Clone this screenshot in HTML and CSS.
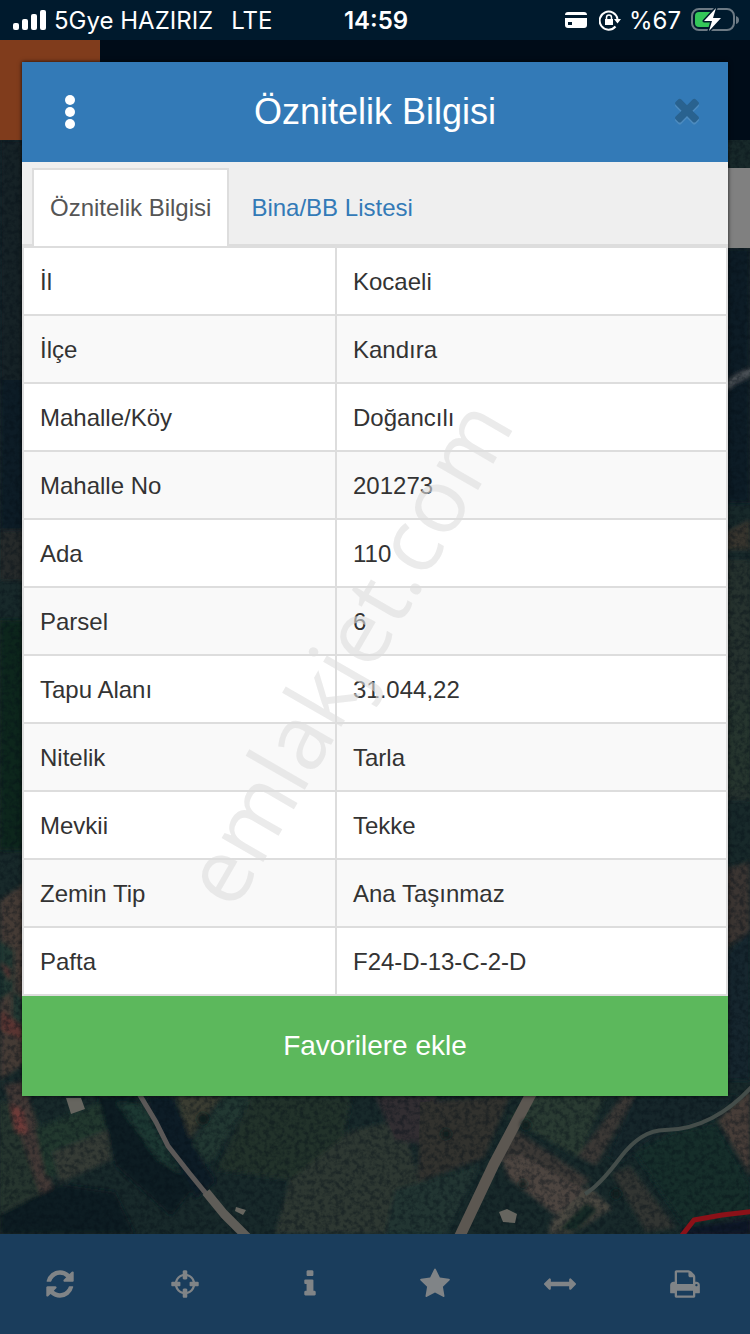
FILE: index.html
```html
<!DOCTYPE html>
<html lang="tr">
<head>
    <meta charset="UTF-8">
    <meta name="viewport" content="width=device-width, initial-scale=1.0">
    <title>Öznitelik Bilgisi</title>
    <link rel="stylesheet" href="styles.css">
</head>
<body>
    <div class="status-bar">
        <div class="status-left">
            <svg class="signal" viewBox="0 0 34 22" width="34" height="22">
                <rect x="1" y="14" width="6" height="7" rx="2"/>
                <rect x="10" y="10" width="6" height="11" rx="2"/>
                <rect x="19" y="5" width="6" height="16" rx="2"/>
                <rect x="28" y="1" width="6" height="20" rx="2"/>
            </svg>
            <span>5Gye HAZIRIZ</span>
            <span class="network">LTE</span>
        </div>
        <div class="clock">14:59</div>
        <div class="status-right">
            <svg viewBox="0 0 22 16" width="22" height="16">
                <path fill="#fff" d="M3 0h16q3 0 3 3H0q0-3 3-3zM0 6h22v7q0 3-3 3H3q-3 0-3-3z"/>
                <rect x="3" y="10" width="4" height="3" fill="#001a2d"/>
            </svg>
            <svg class="lock" viewBox="0 0 22 22" width="22" height="22">
                <path fill="none" stroke="#fff" stroke-width="2" d="M16.500 17.500A9 9 0 1 1 18.500 10"/>
                <path fill="#fff" d="M15 10h7L18.500 14.500zM6 10h8v6H6z"/>
                <path fill="none" stroke="#fff" stroke-width="1.500" d="M7.500 11V8.500a2.500 2.500 0 0 1 5 0V11"/>
            </svg>
            <span class="percent">%67</span>
            <svg class="battery" viewBox="0 0 49 24" width="49" height="24">
                <rect x="1" y="1" width="42" height="21" rx="7" fill="none" stroke="#6d7a84" stroke-width="2"/>
                <path fill="#6d7a84" d="M45 8q3 1 3 4t-3 4z"/>
                <path fill="#34c759" d="M8 4h14v15H8q-4 0-4-4V8q0-4 4-4z"/>
                <path fill="#fff" stroke="#001a2d" stroke-width="3" paint-order="stroke" stroke-linejoin="round" d="M25 0L13 13h8l-3 10L30 10h-8z"/>
            </svg>
        </div>
    </div>

    <div class="top-bar">
        <div class="logo-box"></div>
    </div>

    <div class="map">
        <svg class="satellite" viewBox="0 140 750 1094" preserveAspectRatio="xMidYMax slice">
            <defs>
                <filter id="grain" x="0" y="0" width="100%" height="100%" color-interpolation-filters="sRGB">
                    <feTurbulence type="fractalNoise" baseFrequency="0.2" numOctaves="3" seed="8"/>
                    <feColorMatrix values="0 0 0 0 0.020  0 0 0 0 0.060  0 0 0 0 0.090  3 0 0 0 -1.200"/>
                </filter>
                <filter id="soft"><feGaussianBlur stdDeviation="2"/></filter>
            </defs>
            <rect y="140" width="750" height="1094" fill="#18292a"/>
            <g filter="url(#soft)">
                <!-- left edge -->
                <path fill="#132325" d="M0 140h30v240H0z"/>
                <path fill="#0d1d25" d="M0 380h30v150H0z"/>
                <path fill="#252a2a" d="M0 530h30v50H0z"/>
                <path fill="#11261f" d="M0 620h30v230H0z"/>
                <path fill="#443b36" d="M0 900l30-20v180L0 1080z"/>
                <path fill="#243831" d="M0 940l14 10v40l-14 10zM12 990l14 10v30l-14-10z"/>
                <path fill="#5a3531" d="M0 1010l22 16v14L0 1030zM0 962l10 8v12z"/>
                <!-- right edge -->
                <path fill="#0c1c27" d="M720 248h30v255h-30z"/>
                <path fill="none" stroke="#51575b" stroke-width="6" d="M724 388l10-8 20-10"/>
                <path fill="#39352f" d="M720 535l30-15v30h-30z"/>
                <path fill="#27332f" d="M720 560h30v240h-30z"/>
                <path fill="#26362f" d="M720 700h30v90h-30z"/>
                <path fill="#3b3531" d="M720 870l30-8v70l-30 20z"/>
                <path fill="#14282d" d="M720 960l30-30v150h-30z"/>
                <!-- fields under the dialog -->
                <path fill="#27362f" d="M0 1100l35 10 20 95L0 1218z"/>
                <path fill="#433735" d="M4 1085l20-4 30 110-8 20z"/>
                <path fill="#6e3b38" d="M10 1104l12 6 6 24-12-2z"/>
                <path fill="#20382f" d="M35 1128l65-25 12 55-66 20z"/>
                <path fill="#343a35" d="M52 1152l55-22 4 30-51 23z"/>
                <path fill="#101c23" d="M98 1096h38l55 95-20 25-55-50zM0 1214l60-30 55 8 20 42H0z"/>
                <path fill="#1f3833" d="M116 1102l26 2 46 74-30-18z"/>
                <path fill="#101d25" d="M146 1096h26l30 65 14 20-20 18-40-70z"/>
                <path fill="#3a3c33" d="M176 1096h46l-32 42z"/>
                <path fill="#233831" d="M224 1096h28l-42 68-18-20z"/>
                <path fill="#243029" d="M252 1096h100l-10 50-50 34-75-10z"/>
                <path fill="#2e3733" d="M352 1130l50-10 20 70-20 44H275l15-54z"/>
                <path fill="#302f33" d="M375 1096h62l-4 50-38-6z"/>
                <path fill="#33322f" d="M420 1102l90-6-26 62-66 24z"/>
                <path fill="#223632" d="M395 1190l85-25-35 70h-60z"/>
                <path fill="#293a33" d="M535 1096h70l-26 62-70-40z"/>
                <path fill="#3a3935" d="M516 1130l74 50-20 18-72-40zM622 1096l14-2-40 72-18-10z"/>
                <path fill="#4d453f" d="M502 1158l20-3 67 38-34 22-47-38z"/>
                <path fill="#16252a" d="M634 1096h104l-24 22-54 16-40 28-12-6z"/>
                <path fill="#142e2b" d="M634 1152l40-20 42-8 34 60v30l-65 13z"/>
                <path fill="#473d38" d="M718 1120l32-30v85z"/>
                <path fill="#313630" d="M612 1174l18-8 46 62-30 4z"/>
                <path fill="#4a463f" d="M548 1234l4-14 36-34 24 22-40 26z"/>
                <path fill="#182a28" d="M558 1230l28-28 13 8-24 22z"/>
                <path fill="#0a1927" d="M684 1228l66-10v16h-66z"/>
            </g>
            <rect y="140" width="750" height="1094" filter="url(#grain)" opacity="0.400"/>
            <g fill="none" stroke-linejoin="round">
                <path stroke="#5b5857" stroke-width="5" d="M138 1092l18 30 12 24 22 28 18 22"/>
                <path stroke="#5f5d58" stroke-width="9" d="M206 1192l18 22 24 24"/>
                <path stroke="#5c5751" stroke-width="11" d="M532 1092l-38 72-36 76"/>
                <path stroke="#444d4a" stroke-width="4" d="M756 1082Q735 1106 712 1118T665 1130T620 1158T585 1194"/>
                <path stroke="#8b1118" stroke-width="5" d="M680 1238l14-18 28-5 34-4"/>
            </g>
            <g fill="#66655f">
                <path d="M66 1098h15l4 11-14 5zM236 1207l10 3-3 5-8-4z"/>
                <path d="M499 1212l8-3 10 5-2 9-12-1z"/>
            </g>
            <g fill="#0d1d1e" filter="url(#soft)">
                <circle cx="203" cy="1119" r="6"/>
                <circle cx="446" cy="1134" r="5"/>
                <circle cx="526" cy="1125" r="5"/>
                <circle cx="616" cy="1194" r="5"/>
                <circle cx="523" cy="1184" r="4"/>
            </g>
        </svg>
        <div class="map-control"></div>
    </div>

    <nav class="toolbar">
        <button type="button" aria-label="Yenile">
            <svg viewBox="0 0 1792 1792"><path d="M1639 1056q0 5-1 7-64 268-268 434.500t-478 166.500q-146 0-282.500-55t-243.500-157l-129 129q-19 19-45 19t-45-19-19-45v-448q0-26 19-45t45-19h448q26 0 45 19t19 45-19 45l-137 137q71 66 161 102t187 36q134 0 250-65t186-179q11-17 53-117 8-23 30-23h192q13 0 22.500 9.500t9.500 22.500zm25-800v448q0 26-19 45t-45 19h-448q-26 0-45-19t-19-45 19-45l138-138q-148-137-349-137-134 0-250 65t-186 179q-11 17-53 117-8 23-30 23h-199q-13 0-22.500-9.500t-9.500-22.500v-7q65-268 270-434.500t480-166.500q146 0 284 55.500t245 156.500l130-129q19-19 45-19t45 19 19 45z"/></svg>
        </button>
        <button type="button" aria-label="Konum">
            <svg viewBox="0 0 1792 1792"><path d="M1325 1024h-109q-26 0-45-19t-19-45v-128q0-26 19-45t45-19h109q-32-108-112.500-188.500t-188.500-112.500v109q0 26-19 45t-45 19h-128q-26 0-45-19t-19-45v-109q-108 32-188.500 112.500t-112.500 188.500h109q26 0 45 19t19 45v128q0 26-19 45t-45 19h-109q32 108 112.500 188.500t188.500 112.500v-109q0-26 19-45t45-19h128q26 0 45 19t19 45v109q108-32 188.500-112.500t112.500-188.500zm339-192v128q0 26-19 45t-45 19h-143q-37 161-154.500 278.500t-278.500 154.500v143q0 26-19 45t-45 19h-128q-26 0-45-19t-19-45v-143q-161-37-278.500-154.500t-154.500-278.500h-143q-26 0-45-19t-19-45v-128q0-26 19-45t45-19h143q37-161 154.500-278.500t278.500-154.500v-143q0-26 19-45t45-19h128q26 0 45 19t19 45v143q161 37 278.500 154.500t154.500 278.500h143q26 0 45 19t19 45z"/></svg>
        </button>
        <button type="button" aria-label="Bilgi">
            <svg viewBox="0 0 1792 1792"><path d="M1216 1344v128q0 26-19 45t-45 19h-512q-26 0-45-19t-19-45v-128q0-26 19-45t45-19h64v-384h-64q-26 0-45-19t-19-45v-128q0-26 19-45t45-19h384q26 0 45 19t19 45v576h64q26 0 45 19t19 45zm-128-1152v192q0 26-19 45t-45 19h-256q-26 0-45-19t-19-45v-192q0-26 19-45t45-19h256q26 0 45 19t19 45z"/></svg>
        </button>
        <button type="button" aria-label="Favoriler">
            <svg viewBox="0 0 1792 1792"><path d="M1728 647q0 22-26 48l-363 354 86 500q1 7 1 20 0 21-10.500 35.500t-30.500 14.500q-19 0-40-12l-449-236-449 236q-22 12-40 12-21 0-31.500-14.500t-10.500-35.500q0-6 2-20l86-500-364-354q-25-27-25-48 0-37 56-46l502-73 225-455q19-41 49-41t49 41l225 455 502 73q56 9 56 46z"/></svg>
        </button>
        <button type="button" aria-label="Ölçüm">
            <svg viewBox="0 0 1792 1792"><path d="M1792 896q0 26-19 45l-256 256q-19 19-45 19t-45-19-19-45v-128h-1024v128q0 26-19 45t-45 19-45-19l-256-256q-19-19-19-45t19-45l256-256q19-19 45-19t45 19 19 45v128h1024v-128q0-26 19-45t45-19 45 19l256 256q19 19 19 45z"/></svg>
        </button>
        <button type="button" aria-label="Yazdır">
            <svg viewBox="0 0 1792 1792"><path d="M448 1536h896v-256h-896v256zm0-640h896v-384h-160q-40 0-68-28t-28-68v-160h-640v640zm1152 64q0-26-19-45t-45-19-45 19-19 45 19 45 45 19 45-19 19-45zm128 0v416q0 13-9.500 22.500t-22.500 9.500h-224v160q0 40-28 68t-68 28h-960q-40 0-68-28t-28-68v-160h-224q-13 0-22.500-9.500t-9.500-22.500v-416q0-79 56.500-135.500t135.500-56.500h64v-544q0-40 28-68t68-28h672q40 0 88 20t76 48l152 152q28 28 48 76t20 88v256h64q79 0 135.500 56.500t56.500 135.500z"/></svg>
        </button>
    </nav>

    <div class="dialog" role="dialog" aria-labelledby="dialogTitle">
        <div class="dialog-header">
            <button type="button" class="menu-btn" aria-label="Menü">
                <svg viewBox="0 0 10 34" width="10" height="34">
                    <circle cx="5" cy="5" r="5"/>
                    <circle cx="5" cy="17" r="5"/>
                    <circle cx="5" cy="29" r="5"/>
                </svg>
            </button>
            <h1 id="dialogTitle">Öznitelik Bilgisi</h1>
            <button type="button" class="close-btn" aria-label="Kapat">
                <svg viewBox="0 132 1792 1792" width="36" height="36"><path d="M1490 1322q0 40-28 68l-136 136q-28 28-68 28t-68-28l-294-294-294 294q-28 28-68 28t-68-28l-136-136q-28-28-28-68t28-68l294-294-294-294q-28-28-28-68t28-68l136-136q28-28 68-28t68 28l294 294 294-294q28-28 68-28t68 28l136 136q28 28 28 68t-28 68l-294 294 294 294q28 28 28 68z"/></svg>
            </button>
        </div>
        <div class="tabs">
            <a href="#" class="tab active">Öznitelik Bilgisi</a>
            <a href="#" class="tab">Bina/BB Listesi</a>
        </div>
        <table class="info">
            <tr><th scope="row">İl</th><td>Kocaeli</td></tr>
            <tr><th scope="row">İlçe</th><td>Kandıra</td></tr>
            <tr><th scope="row">Mahalle/Köy</th><td>Doğancılı</td></tr>
            <tr><th scope="row">Mahalle No</th><td>201273</td></tr>
            <tr><th scope="row">Ada</th><td>110</td></tr>
            <tr><th scope="row">Parsel</th><td>6</td></tr>
            <tr><th scope="row">Tapu Alanı</th><td>31.044,22</td></tr>
            <tr><th scope="row">Nitelik</th><td>Tarla</td></tr>
            <tr><th scope="row">Mevkii</th><td>Tekke</td></tr>
            <tr><th scope="row">Zemin Tip</th><td>Ana Taşınmaz</td></tr>
            <tr><th scope="row">Pafta</th><td>F24-D-13-C-2-D</td></tr>
        </table>
        <button type="button" class="favorite-btn">Favorilere ekle</button>
    </div>

    <div class="watermark"><span>emlakjet.com</span></div>
</body>
</html>
```
FILE: styles.css
```css
* {
    box-sizing: border-box;
}
body {
    position: relative;
    display: flex;
    flex-direction: column;
    min-height: 100vh;
    margin: 0;
    font-family: "Liberation Sans", Arial, sans-serif;
    font-size: 24px;
    color: #333;
    background-color: #000c18;
}
button {
    padding: 0;
    border: 0;
    background: none;
    font-family: inherit;
    cursor: pointer;
}
svg {
    display: block;
}

/* status bar */
.status-bar {
    display: grid;
    grid-template-columns: 1fr auto 1fr;
    align-items: center;
    height: 40px;
    padding: 0 10px 0 12px;
    background-color: #001a2d;
    color: #fff;
    font-family: Inter, sans-serif;
    font-size: 24px;
}
.status-left, .status-right {
    display: flex;
    align-items: center;
    gap: 8px;
}
.signal {
    fill: #fff;
}
.network {
    margin-left: 10px;
}
.clock {
    font-weight: 600;
}
.status-right {
    justify-content: flex-end;
}
.lock {
    margin-left: 4px;
}
.battery {
    margin-left: 2px;
}

/* page behind the dialog */
.top-bar {
    height: 100px;
    background-color: #000c18;
}
.logo-box {
    width: 100px;
    height: 100px;
    background-color: #803c1c;
}
.map {
    position: relative;
    flex: 1;
    min-height: 1094px;
    overflow: hidden;
}
.satellite {
    position: absolute;
    width: 100%;
    height: 100%;
}
.map-control {
    position: absolute;
    top: 28px;
    right: 0;
    width: 80px;
    height: 80px;
    background-color: #808080;
}
.toolbar {
    display: flex;
    height: 100px;
    background-color: #1a3d5c;
}
.toolbar button {
    display: flex;
    flex: 1;
    align-items: center;
    justify-content: center;
    padding-right: 5px;
}
.toolbar svg {
    width: 32px;
    height: 32px;
    fill: #808487;
}

/* dialog */
.dialog {
    position: absolute;
    top: 62px;
    left: 22px;
    right: 22px;
    background-color: #fff;
    box-shadow: 0 0 4px rgba(0,0,0,0.8);
}
.dialog-header {
    display: flex;
    align-items: center;
    justify-content: space-between;
    height: 100px;
    background-color: #337ab7;
}
.dialog-header button {
    display: flex;
    align-items: center;
    justify-content: center;
    width: 96px;
    height: 100px;
}
.menu-btn svg {
    fill: #fff;
}
.dialog-header .close-btn {
    padding-left: 14px;
}
.close-btn svg {
    fill: #29628f;
    filter: drop-shadow(0 2px 0 #4d8bbf);
}
h1 {
    margin: 0;
    color: #fff;
    font-size: 36px;
    font-weight: normal;
}
.tabs {
    display: flex;
    gap: 4px;
    padding: 6px 10px 0;
    background-color: #efefef;
    border-bottom: 2px solid #ddd;
}
.tab {
    padding: 21px 16px;
    margin-bottom: -2px;
    border: 2px solid transparent;
    border-bottom: 0;
    line-height: 34px;
    color: #337ab7;
    text-decoration: none;
}
.tab.active {
    border-color: #ddd;
    background-color: #fff;
    color: #555;
}
.info {
    width: 100%;
    border-collapse: collapse;
}
.info th, .info td {
    padding: 17px 16px 15px;
    border: 2px solid #ddd;
    line-height: 34px;
    font-weight: normal;
    text-align: left;
}
.info th {
    width: 313px;
}
.info tr:nth-child(even) {
    background-color: #f9f9f9;
}
.favorite-btn {
    display: block;
    width: 100%;
    height: 100px;
    background-color: #5cb85c;
    color: #fff;
    font-size: 28px;
}

/* watermark */
.watermark {
    position: absolute;
    inset: 0 60px 32px 0;
    display: flex;
    align-items: center;
    justify-content: center;
    pointer-events: none;
}
.watermark span {
    transform: rotate(-60deg);
    font-family: "Open Sans", sans-serif;
    font-size: 90px;
    color: #dedede;
    opacity: 0.6;
}
```
